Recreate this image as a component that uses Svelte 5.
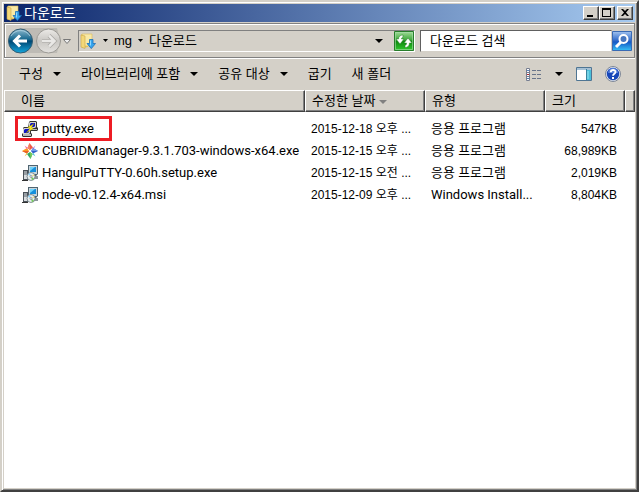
<script>
  const files = [
    { icon: 'putty', name: 'putty.exe', date: '2015-12-18 오후 ...', type: '응용 프로그램', size: '547KB', marked: true },
    { icon: 'cubrid', name: 'CUBRIDManager-9.3.1.703-windows-x64.exe', date: '2015-12-15 오후 ...', type: '응용 프로그램', size: '68,989KB' },
    { icon: 'setup', name: 'HangulPuTTY-0.60h.setup.exe', date: '2015-12-15 오전 ...', type: '응용 프로그램', size: '2,019KB' },
    { icon: 'setup', name: 'node-v0.12.4-x64.msi', date: '2015-12-09 오후 ...', type: 'Windows Install...', size: '8,804KB' }
  ];
</script>

{#snippet caret()}
  <svg class="caret" width="8" height="4" viewBox="0 0 8 4" aria-hidden="true"><path d="M0 0h8L4 4z" fill="currentColor" /></svg>
{/snippet}

{#snippet folder()}
  <svg class="folder" width="16" height="16" viewBox="0 0 16 16" aria-hidden="true">
    <path d="M1 2l1-1h6v13l-5 1-2-1z" fill="#e6c65c" />
    <path d="M2 1h10v12H3z" fill="#f8e9a6" stroke="#d9bb5a" stroke-width=".6" />
    <path d="M1 2l4 1v12.500l-4-1.500z" fill="#f3d778" stroke="#c9a646" stroke-width=".6" />
    <path d="M9.500 6.500h3.500v4h2.500L11.300 15.600 7 10.500h2.500z" fill="#35a4ee" stroke="#1a70b8" stroke-width=".8" />
    <path d="M10.500 7.500v5" stroke="#8fd6ff" />
  </svg>
{/snippet}

{#snippet fileIcon(kind)}
  {#if kind === 'putty'}
    <svg width="16" height="16" viewBox="0 0 16 16" aria-hidden="true">
      <path d="M7 1l1-1h6l1 1v5l1 1v2l-1 1H7l-1-1V7z" fill="#333" />
      <path d="M8 1h6v5l-1 1H7V2z" fill="#d4d4cc" /><path d="M9 2h4v3l-1 1H8V3z" fill="#1016c8" />
      <path d="M8 8h7v1H8z" fill="#b9b9b9" />
      <path d="M1 7l1-1h6l1 1v5l1 1v2l-1 1H1l-1-1v-2l1-1z" fill="#333" />
      <path d="M2 7h6v5l-1 1H1V8z" fill="#d4d4cc" /><path d="M3 8h4v3l-1 1H2V9z" fill="#1016c8" />
      <path d="M1 13h8v2H1z" fill="#b9b9b9" />
      <path d="M12 2.500L5.500 6.500 8 7.500 4 12l7.500-4.500L9.500 6.500z" fill="#ffef20" stroke="#6f6800" stroke-width=".4" />
    </svg>
  {:else if kind === 'cubrid'}
    <svg width="16" height="16" viewBox="0 0 16 16" aria-hidden="true">
      <path d="M7.500 0L11 4.500 8 7 5.500 5z" fill="#ed5849" />
      <path d="M7.500 0l-2 5L8 7z" fill="#f58a62" />
      <path d="M0 8l5-3 2 3-2 2.500z" fill="#ff981e" /><path d="M0 8h7l-2 2.500z" fill="#e8622c" />
      <path d="M16 8l-5-3-2 3 2 2.500z" fill="#325fca" /><path d="M16 8H9l2-3z" fill="#6f9ce8" />
      <path d="M8.500 16L5 11l3-2 2.500 2z" fill="#32ab65" /><path d="M8.500 16L8 9l2.500 2z" fill="#7fce5c" />
      <path d="M2.500 2.500L6 5 4.500 6z" fill="#ee70a4" /><path d="M13.500 2.500L10.500 5.500l1 .5z" fill="#985dcc" />
      <path d="M13.500 13.500L10 11l1.500-1z" fill="#4fc3d2" /><path d="M2.500 13.500L4.500 10l1 1z" fill="#e8b93d" />
    </svg>
  {:else}
    <svg width="16" height="16" viewBox="0 0 16 16" aria-hidden="true">
      <path d="M1 5h5v10H1z" fill="#4a5159" /><path d="M2 6h3v8H2z" fill="#d9dde0" />
      <path d="M2 7h3M2 9h3" stroke="#59636b" />
      <path d="M6 0h10v9l-2 2H6z" fill="#4f6470" /><path d="M7 1h8v8H7z" fill="#c6d5dd" />
      <path d="M8 2h6v5H8z" fill="#168fdc" /><path d="M8 2h5L8 6z" fill="#6fd2f9" />
      <path d="M7 11h9v3H7z" fill="#8b949a" />
      <circle cx="9" cy="11.500" r="4" fill="#e7eeee" stroke="#697980" stroke-width=".8" />
      <path d="M9 11.500l-3-2a4 4 0 012-1.500z" fill="#8bd4ff" /><path d="M9 11.500l3 2-2 2z" fill="#73c958" />
      <path d="M9 11.500l3.500-1-.5-1z" fill="#f5da63" /><circle cx="9" cy="11.500" r="1" fill="#fff" stroke="#667" stroke-width=".6" />
      <path d="M0 15h6v1H0z" fill="#333" />
    </svg>
  {/if}
{/snippet}

<div class="window">
  <header class="titlebar">
    {@render folder()}
    <h1>다운로드</h1>
    <div class="controls">
      <button type="button" aria-label="최소화"><svg width="12" height="10" viewBox="0 0 12 10"><path d="M2 7h6v2H2z" /></svg></button>
      <button type="button" aria-label="최대화"><svg width="12" height="10" viewBox="0 0 12 10"><path d="M1 0h9v9H1zM2 2v6h7V2z" fill-rule="evenodd" /></svg></button>
      <button type="button" class="close" aria-label="닫기"><svg width="12" height="10" viewBox="0 0 12 10"><path d="M2 1h2l2 2 2-2h2L7 4.500 10 8H8L6 6 4 8H2l3-3.500z" /></svg></button>
    </div>
  </header>

  <nav class="navbar">
    <div class="history">
      <svg width="64" height="28" viewBox="0 0 64 28" aria-hidden="true">
        <defs>
          <linearGradient id="back" x2="0" y2="1"><stop stop-color="#8db9ce" /><stop offset=".45" stop-color="#12648c" /><stop offset=".5" stop-color="#004672" /><stop offset="1" stop-color="#15a7dd" /></linearGradient>
          <linearGradient id="forward" x2="0" y2="1"><stop stop-color="#eceae7" /><stop offset=".5" stop-color="#c9c7c3" /><stop offset="1" stop-color="#e4e2df" /></linearGradient>
        </defs>
        <path d="M13 1h37q4 12 0 25H13z" fill="#bebbb5" />
        <circle cx="13.500" cy="14" r="12" fill="url(#back)" stroke="#315b72" />
        <path d="M4 9a11 11 0 0119 0" fill="none" stroke="#b9d9e6" opacity=".7" />
        <path d="M20 14H8M13 8.500L7.500 14l5.500 5.500" fill="none" stroke="#fff" stroke-width="3" />
        <circle cx="41.500" cy="14" r="12" fill="url(#forward)" stroke="#9b9994" />
        <path d="M35 14h12M42 8.500l5.500 5.500-5.500 5.500" fill="none" stroke="#aaa8a5" stroke-width="4" />
        <path d="M35 14h12M42 8.500l5.500 5.500-5.500 5.500" fill="none" stroke="#e9e8e6" stroke-width="2.500" />
        <path d="M56.500 12.500h7L60 16.500z" fill="#eee" stroke="#777" />
      </svg>
      <button type="button" class="back" aria-label="뒤로"></button>
      <button type="button" class="forward" aria-label="앞으로"></button>
    </div>
    <div class="address">
      {@render folder()}
      <button type="button" class="crumb-arrow" aria-label="루트 폴더"><svg width="5" height="3" viewBox="0 0 5 3"><path d="M0 0h5L2.500 3z" /></svg></button>
      <button type="button" class="crumb">mg</button>
      <button type="button" class="crumb-arrow" aria-label="하위 폴더"><svg width="5" height="3" viewBox="0 0 5 3"><path d="M0 0h5L2.500 3z" /></svg></button>
      <button type="button" class="crumb">다운로드</button>
      <button type="button" class="drop" aria-label="이전 위치">{@render caret()}</button>
      <button type="button" class="square" aria-label="새로 고침">
        <svg width="20" height="20" viewBox="0 0 20 20">
          <defs><linearGradient id="green" x2="0" y2="1"><stop stop-color="#a2dc9a" /><stop offset=".45" stop-color="#3ca83a" /><stop offset=".5" stop-color="#0c850d" /><stop offset="1" stop-color="#32cb2f" /></linearGradient></defs>
          <path d="M.5.500h19v19H.500z" fill="url(#green)" stroke="#277d2a" /><path d="M1.500 1.500h17v17h-17z" fill="none" stroke="#a7deab" opacity=".6" />
          <path d="M9 4C6.500 4 4.500 5.500 4.500 8H2l4 5 4-5H7.500c0-1 .5-1.500 1.500-2zM11 16.500c2.500 0 4.500-1.500 4.500-4.500H18l-4-5-4 5h2.500c0 1.500-.5 2-1.500 2.500z" fill="#fff" stroke="#1e7c22" stroke-width=".5" />
        </svg>
      </button>
    </div>
    <form class="search" onsubmit={(e) => e.preventDefault()}>
      <input type="text" aria-label="다운로드 검색" placeholder="다운로드 검색" />
      <button type="submit" class="square" aria-label="검색">
        <svg width="20" height="20" viewBox="0 0 20 20">
          <defs><linearGradient id="blue" x2="0" y2="1"><stop stop-color="#a1c2ee" /><stop offset=".5" stop-color="#2765c9" /><stop offset=".55" stop-color="#1458c5" /><stop offset="1" stop-color="#36c0f5" /></linearGradient></defs>
          <path d="M.5.500h19v19H.500z" fill="url(#blue)" stroke="#396ab4" />
          <path d="M9 11l-5 5" stroke="#fff" stroke-width="3" /><circle cx="11.500" cy="8" r="4" fill="#4777bf" stroke="#fff" stroke-width="2" />
        </svg>
      </button>
    </form>
  </nav>

  <div class="toolbar">
    <button type="button">구성 {@render caret()}</button>
    <button type="button">라이브러리에 포함 {@render caret()}</button>
    <button type="button">공유 대상 {@render caret()}</button>
    <button type="button">굽기</button>
    <button type="button">새 폴더</button>
    <div class="tools">
      <button type="button" aria-label="보기 변경">
        <svg width="16" height="13" viewBox="0 0 16 13">
          <path d="M.5.500h3v12h-3z" fill="#fff" stroke="#777e91" /><path d="M0 4.500h4M0 8.500h4" stroke="#777e91" />
          <path d="M1 2h2v1H1z" fill="#5a83bd" /><path d="M1 6h2v1H1z" fill="#b3262b" /><path d="M1 10h2v1H1z" fill="#507cad" />
          <path d="M6 2.500h10M6 6.500h10M6 10.500h10" stroke="#69758a" stroke-dasharray="4 1" />
        </svg>
      </button>
      <button type="button" aria-label="기타 옵션">{@render caret()}</button>
      <button type="button" aria-label="미리 보기 창">
        <svg width="16" height="14" viewBox="0 0 16 14"><path d="M.5.500h15v13H.500z" fill="#fff" stroke="#4f7593" /><path d="M1 1h14v2H1z" fill="#a6c0d4" /><path d="M10 3h5v10h-5z" fill="#49bfd9" /><path d="M10.500 2v11" stroke="#3a829c" /><path d="M12 4v8" stroke="#9ce5f1" /></svg>
      </button>
      <button type="button" aria-label="도움말">
        <svg width="16" height="16" viewBox="0 0 16 16"><circle cx="8" cy="8" r="7.500" fill="#e2e7f2" stroke="#7e8796" /><circle cx="8" cy="8" r="6.200" fill="#1746b8" /><path d="M3 7a5 5 0 0110 0z" fill="#5680dc" /><path d="M5.800 6.300c0-3 4.700-3 4.700-.3C10.500 7.800 8 7.700 8 9.800" fill="none" stroke="#fff" stroke-width="1.800" /><path d="M7 11h2v2H7z" fill="#fff" /></svg>
      </button>
    </div>
  </div>

  <main>
    <table>
      <colgroup><col /><col class="medium" /><col class="medium" /><col class="small" /><col class="rest" /></colgroup>
      <thead>
        <tr><th scope="col" class="first">이름</th><th scope="col">수정한 날짜 <span class="sort">{@render caret()}</span></th><th scope="col">유형</th><th scope="col">크기</th><td></td></tr>
      </thead>
      <tbody>
        {#each files as file}
          <tr>
            <td class="first"><span class="file" class:marked={file.marked}>{@render fileIcon(file.icon)}{file.name}</span></td>
            <td>{file.date}</td>
            <td class="type">{file.type}</td>
            <td class="size">{file.size}</td>
            <td></td>
          </tr>
        {/each}
      </tbody>
    </table>
  </main>
</div>

<style>
  :global(body) { background: #d4d0c8; }
  * { box-sizing: border-box; }
  .window {
    display: flex;
    flex-direction: column;
    min-height: 100vh;
    padding: 2px;
    background: #d4d0c8;
    border: 2px solid #d4d0c8;
    border-right-color: #404040;
    border-bottom-color: #404040;
    box-shadow: inset 1px 1px #fff, inset -1px -1px #808080;
    color: #000;
    font: 13px/20px "Liberation Sans", "Noto Sans CJK KR", sans-serif;
  }
  svg { display: block; flex: none; }
  button { display: flex; align-items: center; margin: 0; padding: 0; border: 0; background: none; color: inherit; font: inherit; white-space: nowrap; }
  .titlebar { display: flex; align-items: center; gap: 2px; height: 18px; padding: 0 2px; background: linear-gradient(90deg, #0a246a, #a6caf0); }
  h1 { margin: 0; color: #fff; font-size: 14px; font-weight: 400; line-height: 18px; }
  .controls { display: flex; margin-left: auto; }
  .controls button { justify-content: center; width: 16px; height: 14px; background: #d4d0c8; border: 1px solid; border-color: #fff #404040 #404040 #fff; box-shadow: inset -1px -1px #808080; }
  .controls .close { margin-left: 2px; }
  .navbar { display: flex; align-items: center; height: 35px; margin-top: 1px; padding: 0 2px; border: 1px solid #808080; box-shadow: inset 1px 1px #fff, 0 1px #fff; }
  .history { position: relative; margin-right: 7px; }
  .back, .forward { position: absolute; top: 2px; width: 24px; height: 24px; border-radius: 50%; }
  .back { left: 2px; }
  .forward { left: 30px; }
  .address { display: flex; flex: 1; align-items: center; height: 22px; border: 1px solid; border-color: #808080 #fff #fff #808080; }
  .address .folder { margin: 0 7px 0 1px; }
  .crumb-arrow, .crumb { padding-right: 6px; }
  .drop { margin-left: auto; padding-right: 11px; }
  .square { width: 20px; height: 20px; }
  .search { display: flex; flex: 0 1 212px; align-items: center; min-width: 0; margin: 0 0 0 5px; }
  input { flex: 1; min-width: 0; height: 22px; margin: 0; padding: 0 9px; border: 1px solid; border-color: #606060 #d4d0c8 #d4d0c8 #606060; border-radius: 0; background: #fff; font: inherit; }
  input::placeholder { color: #000; opacity: 1; }
  .toolbar { display: flex; align-items: center; gap: 20px; height: 32px; padding: 0 14px 0 15px; }
  .toolbar button { gap: 10px; }
  .tools { display: flex; align-items: center; gap: 13px; margin-left: auto; }
  main { flex: 1; background: #fff; }
  table { width: 100%; border-collapse: separate; border-spacing: 0; table-layout: fixed; }
  .medium { width: 120px; }
  .small { width: 80px; }
  .rest { width: 10px; }
  th, td { height: 22px; padding: 0 6px; font-weight: 400; text-align: left; white-space: nowrap; line-height: 20px; }
  thead th, thead td { background: #d4d0c8; border: 1px solid; border-color: #fff #404040 #404040 #fff; box-shadow: inset -1px -1px #808080; }
  thead td { padding: 0; }
  th.first { padding-left: 16px; }
  td.first { padding-left: 18px; }
  .sort { display: inline-block; vertical-align: middle; color: #808080; }
  tbody { font-size: 12px; }
  tbody::before { display: block; height: 6px; content: ""; }
  .file, .type { font-family: Roboto, "Noto Sans CJK KR", sans-serif; font-size: 13px; }
  .size { padding-right: 8px; text-align: right; }
  .file { position: relative; display: inline-flex; align-items: center; gap: 4px; vertical-align: top; }
  .marked::after { position: absolute; inset: -3px -18px -2px -7px; border: 3px solid #ed1c24; content: ""; }
</style>
